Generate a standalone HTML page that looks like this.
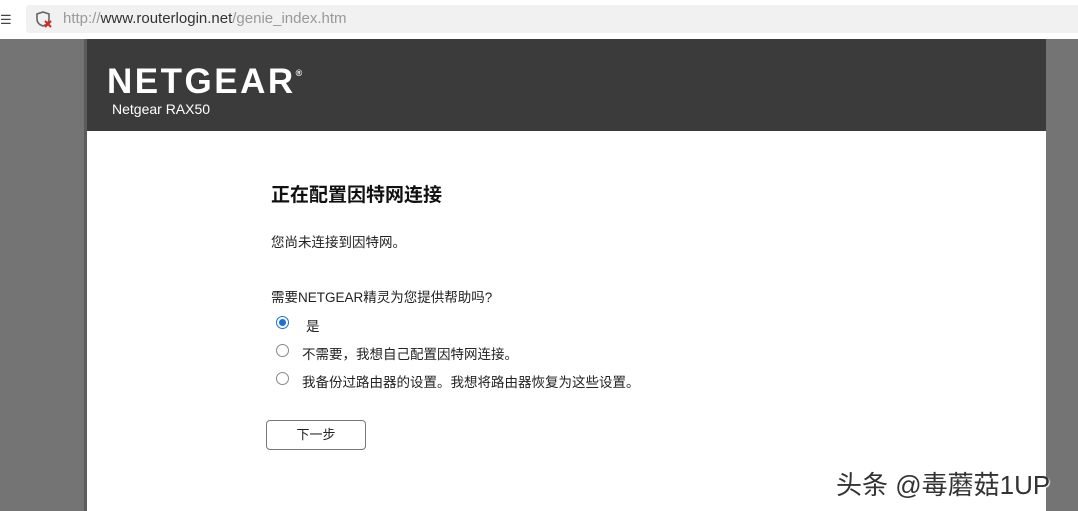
<!DOCTYPE html>
<html><head><meta charset="utf-8"><style>
*{margin:0;padding:0;box-sizing:border-box}
body{width:1078px;height:511px;overflow:hidden;background:#747474;font-family:"Liberation Sans","Noto Sans CJK SC",sans-serif;position:relative}
.top{position:absolute;left:0;top:0;width:1078px;height:39px;background:#fff}
.addr{position:absolute;left:26px;top:5px;width:1060px;height:28px;background:#f1f1f1;border-radius:3px}
.url{position:absolute;left:63px;top:10px;font-size:15px;color:#999}
.url b{font-weight:normal;color:#333}
.edge{position:absolute;left:84px;top:39px;width:3px;height:472px;background:#5c5c5c}
.hdr{position:absolute;left:87px;top:39px;width:959px;height:92px;background:#3b3b3b}
.logo{position:absolute;left:107px;top:62px;font-size:35px;font-weight:bold;color:#fff;letter-spacing:2.5px}
.logo sup{font-size:9px;vertical-align:top;position:relative;top:6px;letter-spacing:0}
.model{position:absolute;left:112px;top:101px;font-size:14px;color:#fff}
.main{position:absolute;left:87px;top:131px;width:959px;height:380px;background:#fff}
.t{position:absolute;color:#222;font-size:13.5px}
.r{position:absolute;width:13px;height:13px;border:1px solid #888;border-radius:50%;background:#fff}
.r.on{border-color:#1a6fd6}
.r.on::after{content:"";position:absolute;left:2px;top:2px;width:7px;height:7px;border-radius:50%;background:#1a6fd6}
.btn{position:absolute;left:266px;top:420px;width:100px;height:30px;border:1px solid #777;border-radius:4px;background:#fff;font-size:13px;text-align:center;line-height:28px;color:#222}
.wm{position:absolute;left:836px;top:465px;font-size:26px;color:#333;text-shadow:1px 1px 1px #fff}
</style></head><body>
<div class="top"><div class="addr"></div>
<div style="position:absolute;left:0;top:12px;font-size:13px;color:#444">☰</div>
<svg style="position:absolute;left:36px;top:11px" width="18" height="18" viewBox="0 0 18 18"><path d="M7 1 L13 3 V8 C13 12 10 14 7 15 C4 14 1 12 1 8 V3 Z" fill="none" stroke="#666" stroke-width="1.6"/><path d="M9 10 L15 16 M15 10 L9 16" stroke="#d22" stroke-width="2"/></svg>
<div class="url">http://<b>www.routerlogin.net</b>/genie_index.htm</div></div>
<div class="edge"></div>
<div class="hdr"></div>
<div class="logo">NETGEAR<sup>®</sup></div>
<div class="model">Netgear RAX50</div>
<div class="main"></div>
<div class="t" style="left:271px;top:180px;font-size:19px;font-weight:bold;color:#111">正在配置因特网连接</div>
<div class="t" style="left:271px;top:231px">您尚未连接到因特网。</div>
<div class="t" style="left:271px;top:286px">需要NETGEAR精灵为您提供帮助吗?</div>
<div class="r on" style="left:276px;top:316px"></div><div class="t" style="left:306px;top:315px">是</div>
<div class="r" style="left:276px;top:344px"></div><div class="t" style="left:302px;top:343px">不需要，我想自己配置因特网连接。</div>
<div class="r" style="left:276px;top:372px"></div><div class="t" style="left:302px;top:371px">我备份过路由器的设置。我想将路由器恢复为这些设置。</div>
<div class="btn">下一步</div>
<div class="wm">头条 @毒蘑菇1UP</div>
</body></html>
